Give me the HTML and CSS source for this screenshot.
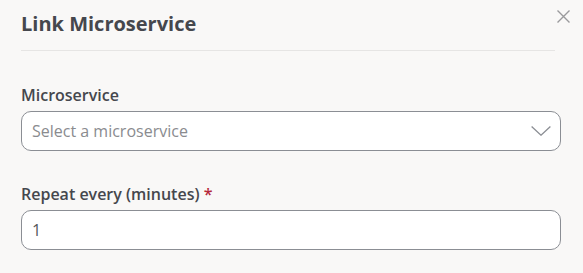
FILE: index.html
```html
<!DOCTYPE html>
<html lang="en">
<head>
    <meta charset="UTF-8">
    <meta name="viewport" content="width=device-width, initial-scale=1.0">
    <title>Link Microservice</title>
    <link rel="stylesheet" href="styles.css">
</head>
<body>
    <div class="modal">
        <div class="modal-header">
            <h2 class="modal-title">Link Microservice</h2>
        </div>
        <button class="close-btn" aria-label="Close">
            <svg width="13" height="13" viewBox="0 0 13 13">
                <path d="M0.5 0.5 L12.5 12.5 M12.5 0.5 L0.5 12.5" stroke="#9a9a9c" stroke-width="1.4" fill="none"/>
            </svg>
        </button>

        <div class="field">
            <label class="field-label">Microservice</label>
            <div class="select">
                <span class="placeholder">Select a microservice</span>
                <svg class="chevron" width="20" height="10" viewBox="0 0 20 10">
                    <path d="M0.6 0.6 L10 9.2 L19.4 0.6" stroke="#8b8e94" stroke-width="1.3" fill="none"/>
                </svg>
            </div>
        </div>

        <div class="field">
            <label class="field-label">Repeat every (minutes) <span class="required">*</span></label>
            <input class="text-input" type="text" value="1">
        </div>
    </div>
</body>
</html>
```

FILE: styles.css
```css
:root {
    --background: #f9f8f7;
    --text: #45474d;
    --border: #8b8e94;
    --muted: #8a8b8f;
}

body {
    margin: 0;
    font-family: "Open Sans", "Noto Sans", sans-serif;
    background: var(--background);
    color: var(--text);
}

.modal {
    position: relative;
    padding: 0 22px 0 21px;
}

.modal-header {
    padding: 10px 0 12px;
    margin-right: 6px;
    border-bottom: 1px solid #e6e5e4;
}

.modal-title {
    margin: 0;
    font-size: 20px;
    line-height: 28px;
    font-weight: 700;
}

.close-btn {
    position: absolute;
    top: 10px;
    right: 13px;
    width: 13px;
    height: 13px;
    padding: 0;
    border: none;
    background: none;
    cursor: pointer;
}

.close-btn svg {
    display: block;
}

.field {
    margin-top: 32px;
}

.field + .field {
    margin-top: 31px;
}

.field-label {
    display: block;
    font-size: 16px;
    line-height: 24px;
    font-weight: 600;
    margin-bottom: 4px;
}

.required {
    color: #b5283a;
}

.select,
.text-input {
    box-sizing: border-box;
    width: 100%;
    height: 40px;
    border: 1px solid var(--border);
    border-radius: 10px;
    background: white;
    font-family: inherit;
    font-size: 16px;
}

.select {
    display: flex;
    align-items: center;
    justify-content: space-between;
    padding: 0 9px 0 10px;
}

.placeholder {
    color: var(--muted);
}

.chevron {
    display: block;
}

.text-input {
    display: block;
    padding: 0 10px;
    color: #55575c;
    outline: none;
}
```
